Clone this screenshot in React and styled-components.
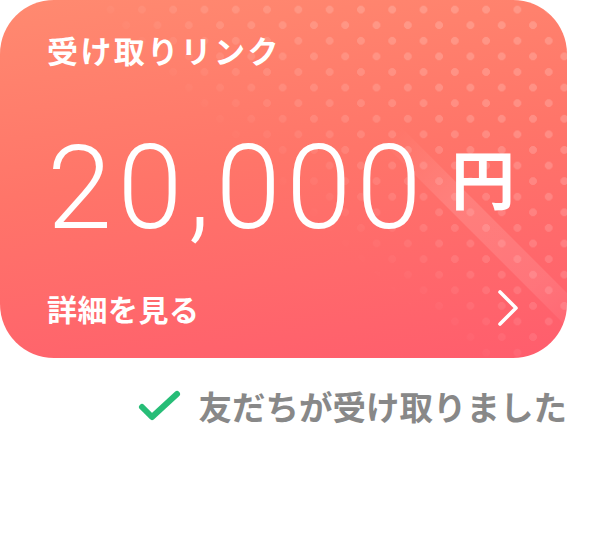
import React from 'react';
import styled, { createGlobalStyle } from 'styled-components';

const GlobalStyle = createGlobalStyle`
  body {
    margin: 0;
    background: #fff;
    font-family: "Noto Sans CJK JP", "Noto Sans", sans-serif;
  }
`;

const App = () => {
  return (
    <Page>
      <GlobalStyle />
      <Card>
        <Dots />
        <Shine />
        <Title>受け取りリンク</Title>
        <AmountRow>
          <Amount>20,000</Amount>
          <Yen>円</Yen>
        </AmountRow>
        <DetailRow>
          <DetailText>詳細を見る</DetailText>
          <svg width="26" height="40" viewBox="0 0 26 40">
            <path d="M5 4 L21 20 L5 36" fill="none" stroke="#fff" strokeWidth="3.6" strokeLinecap="round" strokeLinejoin="round" />
          </svg>
        </DetailRow>
      </Card>
      <Status>
        <svg width="46" height="34" viewBox="0 0 46 34">
          <path d="M5 18 L15 28 L40 5" fill="none" stroke="#27bd77" strokeWidth="6" strokeLinecap="round" strokeLinejoin="round" />
        </svg>
        <StatusText>友だちが受け取りました</StatusText>
      </Status>
    </Page>
  );
};

const Page = styled.div`
  width: 615px;
  height: 538px;
`;

const Card = styled.div`
  position: relative;
  overflow: hidden;
  width: 567px;
  height: 358px;
  box-sizing: border-box;
  padding: 30px 46px 0 47px;
  border-radius: 54px;
  background: linear-gradient(172deg, #ff8a70 0%, #ff7569 45%, #ff5d6d 100%);
  color: #fff;
  display: flex;
  flex-direction: column;
`;

const Dots = styled.div`
  position: absolute;
  inset: 0;
  pointer-events: none;
  background-image:
    radial-gradient(circle, rgba(255, 255, 255, 0.18) 3.6px, transparent 4.2px),
    radial-gradient(circle, rgba(255, 255, 255, 0.18) 3.6px, transparent 4.2px);
  background-size: 31.3px 31.2px;
  background-position: 1px -6px, 16.6px 9.6px;
  -webkit-mask-image: linear-gradient(222deg, #000 20%, rgba(0, 0, 0, 0.6) 40%, transparent 52%);
  mask-image: linear-gradient(222deg, #000 20%, rgba(0, 0, 0, 0.6) 40%, transparent 52%);
`;

const Shine = styled.div`
  position: absolute;
  left: 485px;
  top: 90px;
  width: 24px;
  height: 300px;
  transform: rotate(-45deg);
  transform-origin: center;
  background: linear-gradient(180deg, rgba(255, 255, 255, 0) 0%, rgba(255, 255, 255, 0.12) 30%, rgba(255, 255, 255, 0.1) 70%, rgba(255, 255, 255, 0) 100%);
  pointer-events: none;
`;

const Title = styled.div`
  position: relative;
  font-size: 31px;
  font-weight: 700;
  line-height: 40px;
  letter-spacing: 2.4px;
`;

const AmountRow = styled.div`
  position: relative;
  display: flex;
  align-items: baseline;
  margin-top: 63px;
`;

const Amount = styled.div`
  font-family: Roboto, "Liberation Sans", sans-serif;
  font-weight: 300;
  font-size: 117px;
  line-height: 110px;
  letter-spacing: 5.5px;
`;

const Yen = styled.div`
  font-size: 64px;
  font-weight: 700;
  line-height: 60px;
  margin-left: 24px;
  transform: translateY(-24px);
`;

const DetailRow = styled.div`
  position: relative;
  display: flex;
  align-items: center;
  justify-content: space-between;
  margin-top: 45px;
`;

const DetailText = styled.div`
  font-size: 30px;
  font-weight: 700;
  line-height: 40px;
  letter-spacing: 0.5px;
`;

const Status = styled.div`
  width: 567px;
  display: flex;
  justify-content: flex-end;
  align-items: center;
  gap: 16px;
  margin-top: 26px;
`;

const StatusText = styled.div`
  color: #888888;
  font-size: 33.5px;
  font-weight: 700;
  line-height: 44px;
`;

export default App;
